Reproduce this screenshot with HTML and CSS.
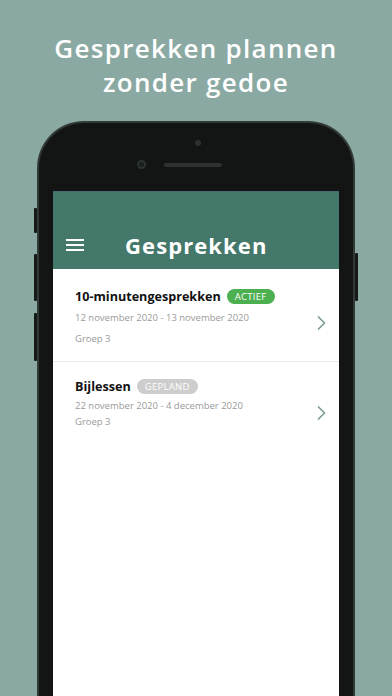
FILE: index.html
```html
<!DOCTYPE html>
<html lang="nl">
<head>
<meta charset="utf-8">
<title>Gesprekken</title>
<link rel="stylesheet" href="styles.css">
</head>
<body>
<div class="page">
  <h1 class="headline">Gesprekken plannen<br>zonder gedoe</h1>
  <div class="phone">
    <span class="btn btn-l1"></span>
    <span class="btn btn-l2"></span>
    <span class="btn btn-l3"></span>
    <span class="btn btn-r1"></span>
    <div class="top">
      <span class="sensor"></span>
      <div class="top-row">
        <span class="camera"></span>
        <span class="speaker"></span>
      </div>
    </div>
    <div class="screen">
      <header class="appbar">
        <svg class="menu" width="18" height="12" viewBox="0 0 18 12"><rect x="0" y="0" width="18" height="2" fill="#fff"/><rect x="0" y="5" width="18" height="2" fill="#fff"/><rect x="0" y="10" width="18" height="2" fill="#fff"/></svg>
        <span class="apptitle">Gesprekken</span>
      </header>
      <ul class="list">
        <li class="item item-1">
          <div class="info">
            <div class="title-row"><span class="title">10-minutengesprekken</span><span class="badge badge-active">ACTIEF</span></div>
            <div class="date">12 november 2020 - 13 november 2020</div>
            <div class="group">Groep 3</div>
          </div>
          <svg class="chev" width="9" height="14" viewBox="0 0 9 14"><path d="M1.5 1 L7.5 7 L1.5 13" fill="none" stroke="#7f9c97" stroke-width="1.7" stroke-linecap="round" stroke-linejoin="round"/></svg>
        </li>
        <li class="item item-2">
          <div class="info">
            <div class="title-row"><span class="title">Bijlessen</span><span class="badge badge-planned">GEPLAND</span></div>
            <div class="date">22 november 2020 - 4 december 2020</div>
            <div class="group">Groep 3</div>
          </div>
          <svg class="chev" width="9" height="14" viewBox="0 0 9 14"><path d="M1.5 1 L7.5 7 L1.5 13" fill="none" stroke="#7f9c97" stroke-width="1.7" stroke-linecap="round" stroke-linejoin="round"/></svg>
        </li>
      </ul>
    </div>
  </div>
</div>
</body>
</html>
```
FILE: styles.css
```css
* { box-sizing: border-box; }
html, body { margin: 0; padding: 0; }
body {
  background: #8ba9a3;
  font-family: "Open Sans", "Noto Sans", sans-serif;
  width: 392px;
  height: 696px;
  overflow: hidden;
}
.page {
  display: flex;
  flex-direction: column;
  align-items: flex-start;
}
.headline {
  margin: 0;
  padding-top: 31px;
  width: 392px;
  text-align: center;
  color: #fff;
  font-weight: 600;
  font-size: 26px;
  line-height: 34px;
  letter-spacing: 1.3px;
}
.phone {
  position: relative;
  margin-top: 22px;
  margin-left: 37px;
  width: 318px;
  height: 700px;
  background: #131514;
  border: 2px solid #323a38;
  border-bottom: none;
  border-radius: 47px 47px 0 0;
  padding: 0 14px;
  display: flex;
  flex-direction: column;
}
.btn {
  position: absolute;
  width: 3px;
  background: #151918;
  border-radius: 1px;
}
.btn-l1 { left: -5px; top: 85px; height: 25px; }
.btn-l2 { left: -5px; top: 131px; height: 47px; }
.btn-l3 { left: -5px; top: 190px; height: 48px; }
.btn-r1 { right: -5px; top: 130px; height: 48px; }
.top {
  height: 68px;
  display: flex;
  flex-direction: column;
  align-items: center;
  padding-top: 17px;
}
.sensor {
  width: 6px;
  height: 6px;
  border-radius: 50%;
  background: #2c3231;
  margin-left: 3px;
}
.top-row {
  display: flex;
  align-items: center;
  gap: 18px;
  margin-top: 14px;
  margin-left: -34px;
}
.camera {
  width: 9px;
  height: 9px;
  border-radius: 50%;
  background: #1b1f1e;
  border: 2px solid #2d3332;
}
.speaker {
  width: 58px;
  height: 4px;
  border-radius: 2px;
  background: #2c3231;
}
.screen {
  flex: 1;
  background: #fff;
  border-top: 1px solid #4a6a78;
  display: flex;
  flex-direction: column;
}
.appbar {
  height: 77px;
  background: #44786a;
  display: flex;
  align-items: center;
  padding: 28px 0 0 13px;
}
.menu { display: block; }
.apptitle {
  margin-left: 41px;
  color: #fff;
  font-weight: 700;
  font-size: 22px;
  letter-spacing: 1.1px;
}
.list {
  list-style: none;
  margin: 0;
  padding: 0;
}
.item {
  display: flex;
  align-items: flex-start;
  padding: 0 13px 0 22px;
}
.item-1 { height: 93px; padding-top: 18px; border-bottom: 1px solid #ececec; }
.item-2 { height: 90px; padding-top: 15px; }
.info { flex: 1; }
.title-row {
  display: flex;
  align-items: center;
  gap: 6px;
  height: 18px;
}
.title {
  font-weight: 700;
  font-size: 12.6px;
  color: #111;
}
.badge {
  font-size: 9.5px;
  line-height: 15px;
  height: 15px;
  padding: 0 8px;
  border-radius: 8px;
  color: #fff;
  letter-spacing: 0.3px;
}
.badge-active { background: #4caf50; }
.badge-planned { background: #cdcdcd; }
.date, .group {
  font-size: 9.5px;
  line-height: 14px;
  color: #9a9a9a;
}
.item-1 .date { margin-top: 6px; }
.item-1 .group { margin-top: 7px; }
.item-2 .date { margin-top: 4px; }
.item-2 .group { margin-top: 2px; }
.chev { flex: none; margin-top: 29px; }
```
